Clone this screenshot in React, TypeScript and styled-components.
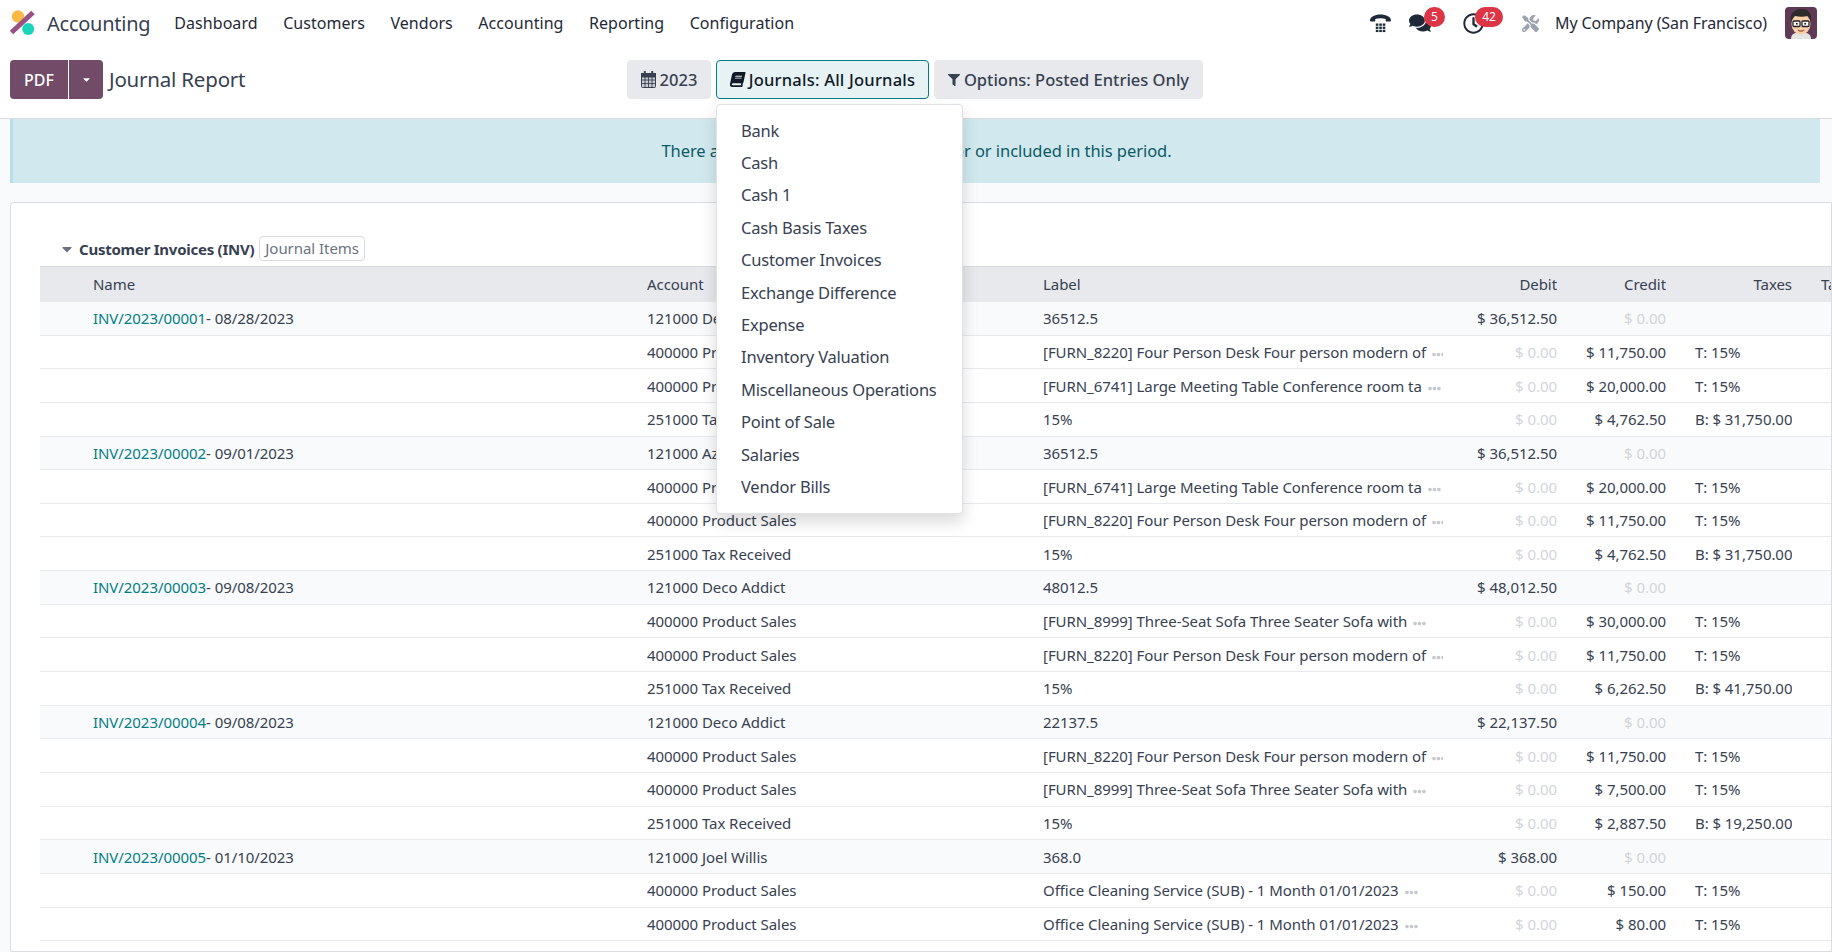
import React from "react";
import styled, { createGlobalStyle } from "styled-components";
import { FaBook, FaComments, FaEllipsisH, FaFilter, FaRegClock, FaTools, FaCaretDown } from "react-icons/fa";

const FONT = `"Noto Sans", "Open Sans", sans-serif`;

const Global = createGlobalStyle`
  html, body { margin: 0; padding: 0; height: 100%; overflow: hidden; background: #f9fafb; }
  body { font-family: ${FONT}; font-size: 15px; color: #374151; }
  #root { height: 100%; }
  * { box-sizing: border-box; }
`;

const Page = styled.div`
  width: 1832px;
  height: 952px;
  overflow: hidden;
  display: flex;
  flex-direction: column;
  background: #f9fafb;
  position: relative;
`;

const Navbar = styled.header`
  height: 46px;
  flex: none;
  background: #fff;
  display: flex;
  align-items: center;
  padding: 0 15px 0 10px;
  color: #1f2937;
`;
const Logo = styled.svg`
  width: 26px;
  height: 26px;
  flex: none;
`;
const Brand = styled.span`
  font-size: 20px;
  margin-left: 11px;
  margin-right: 24px;
  color: #374151;
  letter-spacing: -0.25px;
`;
const NavItem = styled.span`
  font-size: 16px;
  letter-spacing: 0.05px;
  margin-right: 25.5px;
  color: #1f2937;
`;
const NavRight = styled.div`
  margin-left: auto;
  display: flex;
  align-items: center;
  color: #1f2937;
`;
const IconSlot = styled.span<{ $w: number }>`
  position: relative;
  width: ${(p) => p.$w}px;
  height: 24px;
  display: flex;
  align-items: center;
`;
const Badge = styled.span<{ $l: number; $w: number }>`
  position: absolute;
  top: -4px;
  left: ${(p) => p.$l}px;
  width: ${(p) => p.$w}px;
  height: 20px;
  border-radius: 10px;
  background: #dc3545;
  color: #fff;
  font-size: 12px;
  line-height: 20px;
  text-align: center;
`;
const Company = styled.span`
  font-size: 16px;
  letter-spacing: -0.09px;
  margin-right: 18px;
`;
const Avatar = styled.svg`
  width: 32px;
  height: 32px;
  border-radius: 4px;
  flex: none;
  display: block;
`;

const ControlPanel = styled.div`
  height: 73px;
  flex: none;
  background: #fff;
  border-bottom: 1px solid #d8dadd;
  display: flex;
  align-items: flex-start;
  padding: 14px 0 0 10px;
`;
const PanelLeft = styled.div`
  width: 617px;
  flex: none;
  display: flex;
`;
const SplitButton = styled.div`
  display: flex;
  height: 39px;
  gap: 1px;
  flex: none;
`;
const Primary = styled.button`
  border: 0;
  background: #714b67;
  color: #fff;
  font: 500 16px ${FONT};
  width: 58px;
  border-radius: 4px 0 0 4px;
  padding: 0;
`;
const PrimaryCaret = styled(Primary)`
  width: 34px;
  border-radius: 0 4px 4px 0;
  display: flex;
  align-items: center;
  justify-content: center;
`;
const Title = styled.div`
  font-size: 20.5px;
  color: #374151;
  margin-left: 6px;
  line-height: 39px;
  letter-spacing: -0.2px;
`;
const Filters = styled.div`
  display: flex;
  gap: 5px;
`;
const FilterButton = styled.button<{ $active?: boolean; $w: number }>`
  height: 39px;
  width: ${(p) => p.$w}px;
  padding: 0;
  border-radius: 4px;
  border: 1px solid ${(p) => (p.$active ? "#017e84" : "#e7e9ed")};
  background: ${(p) => (p.$active ? "#e6f2f3" : "#e7e9ed")};
  color: ${(p) => (p.$active ? "#111827" : "#374151")};
  font: 500 16.5px ${FONT};
  letter-spacing: ${(p) => (p.$active ? "0.22px" : "0")};
  display: flex;
  align-items: center;
  justify-content: center;
  gap: 4px;
  white-space: nowrap;
`;
const TiltBook = styled(FaBook)`
  transform: skewX(-12deg);
`;
const Menu = styled.div`
  position: absolute;
  left: 716px;
  top: 104px;
  width: 247px;
  height: 410px;
  background: #fff;
  border: 1px solid #dfe1e5;
  border-radius: 4px;
  box-shadow: 0 8px 16px rgba(0, 0, 0, 0.15);
  padding: 9.7px 0;
  z-index: 5;
`;
const MenuItem = styled.div`
  height: 32.4px;
  line-height: 32px;
  padding-left: 24px;
  font-size: 16.5px;
  letter-spacing: -0.2px;
  color: #374151;
`;

const Content = styled.main`
  flex: 1;
  min-height: 0;
  padding: 0 12px 0 10px;
  display: flex;
  flex-direction: column;
`;
const Alert = styled.div`
  height: 64px;
  flex: none;
  padding-bottom: 2px;
  background: #d1e9ee;
  border-left: 3px solid #b5e0e7;
  color: #0b5a66;
  font-size: 16.5px;
  letter-spacing: -0.06px;
  display: flex;
  align-items: center;
  justify-content: center;
`;
const Card = styled.section`
  margin-top: 19px;
  margin-right: -12px;
  flex: 1;
  min-height: 0;
  background: #fff;
  border: 1px solid #dadce0;
  border-radius: 4px 0 0 0;
  padding: 31px 0 0 29px;
  overflow: hidden;
`;
const SectionHead = styled.div`
  height: 32px;
  display: flex;
  align-items: center;
  padding: 0 0 3px 19px;
`;
const Caret = styled.span`
  color: #6b7280;
  display: flex;
  width: 16px;
  margin-right: 4px;
`;
const SectionTitle = styled.span`
  font-weight: 700;
  font-size: 15px;
  letter-spacing: -0.25px;
  color: #374151;
`;
const ItemsTag = styled.span`
  margin-left: 5px;
  height: 25px;
  line-height: 23px;
  padding: 0 5px;
  border: 1px solid #d8dadd;
  border-radius: 4px;
  color: #6b7280;
  font-size: 15px;
  letter-spacing: -0.05px;
`;

const Table = styled.table`
  width: 1792px;
  border-collapse: collapse;
  table-layout: fixed;
`;
const Col = styled.col<{ $w: number }>`
  width: ${(p) => p.$w}px;
`;
const Th = styled.th<{ $right?: boolean; $pad?: number }>`
  height: 35px;
  background: #e7e9ed;
  border-top: 1px solid #d8dadd;
  font-weight: 400;
  font-size: 15px;
  letter-spacing: -0.06px;
  color: #374151;
  text-align: ${(p) => (p.$right ? "right" : "left")};
  padding: 0 0 0 ${(p) => p.$pad ?? 0}px;
  white-space: nowrap;
  overflow: hidden;
`;
const Tr = styled.tr<{ $head?: boolean }>`
  background: ${(p) => (p.$head ? "#f9fafb" : "#fff")};
`;
const Td = styled.td<{ $right?: boolean; $muted?: boolean; $pad?: number }>`
  height: 33.65px;
  border-bottom: 1px solid #e7e9ed;
  font-size: 15px;
  letter-spacing: -0.06px;
  color: ${(p) => (p.$muted ? "#d1d5db" : "#374151")};
  text-align: ${(p) => (p.$right ? "right" : "left")};
  padding: 0 0 0 ${(p) => p.$pad ?? 0}px;
  white-space: nowrap;
  overflow: hidden;
`;
const DocLink = styled.span`
  color: #017e84;
`;
const Dots = styled(FaEllipsisH)`
  color: #c4c7cc;
  margin-left: 6px;
  vertical-align: -3px;
`;

type Line = { acc: string; label: string; clip?: boolean; debit: string; credit: string; tax: string };
type Move = { name: string; date: string; lines: Line[] };

const desk = "[FURN_8220] Four Person Desk Four person modern of";
const table = "[FURN_6741] Large Meeting Table Conference room ta";
const sofa = "[FURN_8999] Three-Seat Sofa Three Seater Sofa with";
const office = "Office Cleaning Service (SUB) - 1 Month 01/01/2023";
const Z = "$ 0.00";
const PS = "400000 Product Sales";
const TR = "251000 Tax Received";

const moves: Move[] = [
  { name: "INV/2023/00001", date: "08/28/2023", lines: [
    { acc: "121000 Deco Addict", label: "36512.5", debit: "$ 36,512.50", credit: Z, tax: "" },
    { acc: PS, label: desk, clip: true, debit: Z, credit: "$ 11,750.00", tax: "T: 15%" },
    { acc: PS, label: table, clip: true, debit: Z, credit: "$ 20,000.00", tax: "T: 15%" },
    { acc: TR, label: "15%", debit: Z, credit: "$ 4,762.50", tax: "B: $ 31,750.00" },
  ] },
  { name: "INV/2023/00002", date: "09/01/2023", lines: [
    { acc: "121000 Azure Interior", label: "36512.5", debit: "$ 36,512.50", credit: Z, tax: "" },
    { acc: PS, label: table, clip: true, debit: Z, credit: "$ 20,000.00", tax: "T: 15%" },
    { acc: PS, label: desk, clip: true, debit: Z, credit: "$ 11,750.00", tax: "T: 15%" },
    { acc: TR, label: "15%", debit: Z, credit: "$ 4,762.50", tax: "B: $ 31,750.00" },
  ] },
  { name: "INV/2023/00003", date: "09/08/2023", lines: [
    { acc: "121000 Deco Addict", label: "48012.5", debit: "$ 48,012.50", credit: Z, tax: "" },
    { acc: PS, label: sofa, clip: true, debit: Z, credit: "$ 30,000.00", tax: "T: 15%" },
    { acc: PS, label: desk, clip: true, debit: Z, credit: "$ 11,750.00", tax: "T: 15%" },
    { acc: TR, label: "15%", debit: Z, credit: "$ 6,262.50", tax: "B: $ 41,750.00" },
  ] },
  { name: "INV/2023/00004", date: "09/08/2023", lines: [
    { acc: "121000 Deco Addict", label: "22137.5", debit: "$ 22,137.50", credit: Z, tax: "" },
    { acc: PS, label: desk, clip: true, debit: Z, credit: "$ 11,750.00", tax: "T: 15%" },
    { acc: PS, label: sofa, clip: true, debit: Z, credit: "$ 7,500.00", tax: "T: 15%" },
    { acc: TR, label: "15%", debit: Z, credit: "$ 2,887.50", tax: "B: $ 19,250.00" },
  ] },
  { name: "INV/2023/00005", date: "01/10/2023", lines: [
    { acc: "121000 Joel Willis", label: "368.0", debit: "$ 368.00", credit: Z, tax: "" },
    { acc: PS, label: office, clip: true, debit: Z, credit: "$ 150.00", tax: "T: 15%" },
    { acc: PS, label: office, clip: true, debit: Z, credit: "$ 80.00", tax: "T: 15%" },
    { acc: TR, label: "15%", debit: Z, credit: "$ 34.50", tax: "B: $ 230.00" },
  ] },
];

const journals = ["Bank", "Cash", "Cash 1", "Cash Basis Taxes", "Customer Invoices", "Exchange Difference", "Expense", "Inventory Valuation", "Miscellaneous Operations", "Point of Sale", "Salaries", "Vendor Bills"];
const navItems = ["Dashboard", "Customers", "Vendors", "Accounting", "Reporting", "Configuration"];
const colWidths = [607, 396, 400, 114, 109, 126, 40];

function PhoneIcon() {
  return (
    <svg width="23" height="23" viewBox="0 0 22 22" fill="#1f2937">
      <path d="M1 8c0-3 4.500-5.500 10-5.500S21 5 21 8c0 .8-.4 1.200-1 1.200h-3c-.7 0-1-.5-1-1V6.800c-1.400-.6-3.200-.9-5-.9s-3.600.3-5 .9v1.400c0 .5-.3 1-1 1H2C1.400 9.200 1 8.800 1 8z" />
      {[6.500, 9.800, 13.100].map((x) =>
        [11, 14, 17].map((y) => <rect key={`${x}-${y}`} x={x} y={y} width="2.500" height="2.200" />)
      )}
    </svg>
  );
}

function CalendarIcon() {
  return (
    <svg width="15" height="17" viewBox="0 0 15 17" fill="none" stroke="#374151">
      <rect x="0.500" y="2.500" width="14" height="14" rx="1" fill="#c9ccd2" />
      <rect x="0.500" y="2.500" width="14" height="3.500" fill="#374151" />
      <path d="M0.500 9h14M0.500 12.500h14M4 6v10.500M7.500 6v10.500M11 6v10.500" strokeWidth="0.900" />
      <path d="M3.800 0.500v3.500M11.200 0.500v3.500" strokeWidth="2" strokeLinecap="round" />
    </svg>
  );
}

export default function App() {
  return (
    <Page>
      <Global />
      <Navbar>
        <Logo viewBox="0 0 26 26">
          <circle cx="8" cy="6.500" r="6.200" fill="#fbb945" />
          <circle cx="18.200" cy="19" r="6" fill="#1ad3bb" />
          <line x1="1.500" y1="22.500" x2="23" y2="2.500" stroke="#985184" strokeWidth="5" />
        </Logo>
        <Brand>Accounting</Brand>
        {navItems.map((n) => (
          <NavItem key={n}>{n}</NavItem>
        ))}
        <NavRight>
          <IconSlot $w={40}><PhoneIcon /></IconSlot>
          <IconSlot $w={54}>
            <FaComments size={22} />
            <Badge $l={15} $w={21}>5</Badge>
          </IconSlot>
          <IconSlot $w={59}>
            <FaRegClock size={21} />
            <Badge $l={12} $w={28}>42</Badge>
          </IconSlot>
          <IconSlot $w={33}><FaTools size={17} color="#9ca3af" /></IconSlot>
          <Company>My Company (San Francisco)</Company>
          <Avatar viewBox="0 0 32 32">
            <rect width="32" height="32" fill="#5e3a55" />
            <path d="M6 32c0-5 4-7 10-7s10 2 10 7z" fill="#e4e4e4" />
            <ellipse cx="16" cy="17" rx="9.500" ry="10.500" fill="#f6cfa9" />
            <path d="M6 15C4 6 10 2 17 2c6 0 10 4 9 13-1-3-2-5-3-6-4 1-9 1-13 0-2 1-3 3-4 6z" fill="#2b2b2b" />
            <rect x="8" y="14" width="7" height="5.500" rx="1" fill="#fff" stroke="#222" strokeWidth="1.300" />
            <rect x="17" y="14" width="7" height="5.500" rx="1" fill="#fff" stroke="#222" strokeWidth="1.300" />
            <circle cx="11.800" cy="16.800" r="1" fill="#222" />
            <circle cx="20.200" cy="16.800" r="1" fill="#222" />
            <path d="M13 23c2 1.500 4 1.500 6 0" stroke="#a5533f" strokeWidth="1.200" fill="none" />
          </Avatar>
        </NavRight>
      </Navbar>
      <ControlPanel>
        <PanelLeft>
          <SplitButton>
            <Primary>PDF</Primary>
            <PrimaryCaret><FaCaretDown size={11} /></PrimaryCaret>
          </SplitButton>
          <Title>Journal Report</Title>
        </PanelLeft>
        <Filters>
          <FilterButton $w={84}><CalendarIcon />2023</FilterButton>
          <FilterButton $active $w={213}><TiltBook size={15} />Journals: All Journals</FilterButton>
          <FilterButton $w={269}><FaFilter size={12} />Options: Posted Entries Only</FilterButton>
        </Filters>
      </ControlPanel>
      <Menu>
        {journals.map((j) => (
          <MenuItem key={j}>{j}</MenuItem>
        ))}
      </Menu>
      <Content>
        <Alert>There are unposted Journal Entries prior or included in this period.</Alert>
        <Card>
          <SectionHead>
            <Caret><FaCaretDown size={16} /></Caret>
            <SectionTitle>Customer Invoices (INV)</SectionTitle>
            <ItemsTag>Journal Items</ItemsTag>
          </SectionHead>
          <Table>
            <colgroup>
              {colWidths.map((w, i) => (
                <Col key={i} $w={w} />
              ))}
            </colgroup>
            <thead>
              <tr>
                <Th $pad={53}>Name</Th>
                <Th>Account</Th>
                <Th>Label</Th>
                <Th $right>Debit</Th>
                <Th $right>Credit</Th>
                <Th $right>Taxes</Th>
                <Th $pad={29}>Tax Grids</Th>
              </tr>
            </thead>
            <tbody>
              {moves.flatMap((m) =>
                m.lines.map((l, i) => (
                  <Tr key={`${m.name}-${i}`} $head={i === 0}>
                    <Td $pad={53}>
                      {i === 0 && (
                        <>
                          <DocLink>{m.name}</DocLink>- {m.date}
                        </>
                      )}
                    </Td>
                    <Td>{l.acc}</Td>
                    <Td>
                      {l.label}
                      {l.clip && <Dots size={13} />}
                    </Td>
                    <Td $right $muted={l.debit === Z}>{l.debit}</Td>
                    <Td $right $muted={l.credit === Z}>{l.credit}</Td>
                    <Td $pad={29}>{l.tax}</Td>
                    <Td />
                  </Tr>
                ))
              )}
            </tbody>
          </Table>
        </Card>
      </Content>
    </Page>
  );
}
